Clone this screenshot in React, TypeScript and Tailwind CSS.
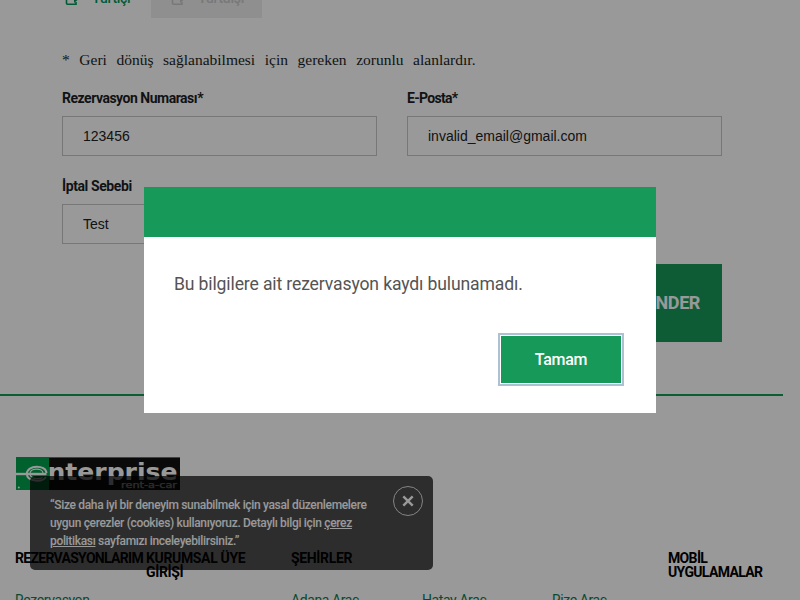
import React from "react";

const footerHeading = "font-bold text-[14px] leading-[14px] text-black whitespace-nowrap";
const footerLink = "text-[14px] leading-[18px] tracking-[-0.4px] text-[#0b7d50] whitespace-nowrap";

function TabIcon() {
  return (
    <svg width="14" height="16" viewBox="0 0 14 16" fill="none" stroke="currentColor" strokeWidth="1.6">
      <path d="M5 1H1.5v12.2q0 1 1 1H11V12" />
      <path d="M5 8h5" />
      <path d="M9 5l5 3.8L9 13z" fill="currentColor" stroke="none" />
    </svg>
  );
}

function Tabs() {
  return (
    <div className="flex h-[18px] items-end overflow-hidden pl-[40px] text-[14px] font-medium tracking-[-0.3px]">
      <div className="flex h-10 w-[111px] shrink-0 items-center gap-[13px] pl-[25px] text-[#00975a]">
        <TabIcon />
        <span>Yurtiçi</span>
      </div>
      <div className="flex h-10 w-[111px] shrink-0 items-center gap-[13px] bg-[#eeeeee] pl-[20px] text-[#c9c9c9]">
        <TabIcon />
        <span>Yurtdışı</span>
      </div>
    </div>
  );
}

function Field({ label, value, labelClass }: { label: string; value: string; labelClass: string }) {
  return (
    <label className="block w-[315px]">
      <span className={"block h-[26px] whitespace-nowrap text-[14px] font-bold leading-[17px] text-[#1c1f26] " + labelClass}>{label}</span>
      <input
        className="block h-10 w-full border border-[#c6c6c6] bg-white pl-[20px] pr-5 font-['Liberation_Sans',Arial,sans-serif] text-[14px] text-[#222] outline-none"
        value={value}
        readOnly
      />
    </label>
  );
}

function Logo() {
  return (
    <svg className="block" width="164" height="33" viewBox="0 0 164 33">
      <rect y="0.4" width="164" height="32.6" fill="#111" />
      <rect y="0.4" width="33" height="32.6" fill="#00a04e" />
      <g fill="none" stroke="#fff">
        <path d="M0 17h30.5" strokeWidth="2.4" />
        <path d="M30 20C26.5 25.5 11 25 10.8 16.8C11 7.5 30 7.5 30.5 16" strokeWidth="2" />
        <path d="M26.5 20.5C23 22.5 14 22 14 16.8C14 10.8 26.5 10.8 27 16" strokeWidth="1.2" />
      </g>
      <circle cx="2.8" cy="30.5" r="1" fill="#fff" />
      <text x="31.5" y="22.8" fill="#fff" fontFamily="DejaVu Sans" fontWeight="700" fontSize="23" textLength="130" lengthAdjust="spacingAndGlyphs">nterprise</text>
      <text x="105" y="31" fill="#fff" stroke="#fff" strokeWidth="0.25" fontFamily="DejaVu Sans" fontSize="9" textLength="56" lengthAdjust="spacingAndGlyphs">rent-a-car</text>
    </svg>
  );
}

function CookieNotice() {
  return (
    <div className="absolute left-[30px] top-[476px] flex h-[94px] w-[403px] justify-between rounded-[5px] bg-black/70 pl-5 pr-[10px]">
      <p className="whitespace-nowrap pt-[20px] text-[12px] font-medium leading-[18px] tracking-[-0.33px] text-white">
        “Size daha iyi bir deneyim sunabilmek için yasal düzenlemelere
        <br />
        uygun çerezler (cookies) kullanıyoruz. Detaylı bilgi için <u>çerez</u>
        <br />
        <u>politikası</u> sayfamızı inceleyebilirsiniz.”
      </p>
      <button className="mt-[10px] flex size-[30px] items-center justify-center rounded-full border border-white/80">
        <svg width="12" height="12" viewBox="0 0 12 12" stroke="#fff" strokeWidth="2.4">
          <path d="M1.3 1.3l9.4 9.4M10.7 1.3l-9.4 9.4" />
        </svg>
      </button>
    </div>
  );
}

function Modal() {
  return (
    <div className="absolute inset-0 flex items-center justify-center bg-black/40">
      <div className="h-[226px] w-[512px] bg-white">
        <div className="h-[50px] bg-[#179a59]" />
        <div className="flex flex-col px-[30px] pt-[35px]">
          <p className="whitespace-nowrap text-[17.6px] leading-6 tracking-[-0.14px] text-[#545454]">Bu bilgilere ait rezervasyon kaydı bulunamadı.</p>
          <button className="mr-[5px] mt-[40px] h-[47px] w-[120px] self-end bg-[#179a59] text-[16px] font-medium tracking-[-0.25px] text-white outline-2 outline-offset-1 outline-[#adc0d4]">
            Tamam
          </button>
        </div>
      </div>
    </div>
  );
}

export default function App() {
  return (
    <div className="relative h-[600px] w-[800px] overflow-hidden bg-white font-['Roboto',sans-serif]">
      <Tabs />
      <main className="h-[376px] pl-[62px] pt-[32px]">
        <p className="whitespace-nowrap font-['Liberation_Serif',serif] text-[15.5px] leading-5 text-[#1c1f26] [word-spacing:5.7px]">
          * Geri dönüş sağlanabilmesi için gereken zorunlu alanlardır.
        </p>
        <div className="flex w-[660px] flex-wrap gap-x-[30px] gap-y-[22px] pt-[20px]">
          <Field label="Rezervasyon Numarası*" value="123456" labelClass="tracking-[-0.49px]" />
          <Field label="E-Posta*" value="invalid_email@gmail.com" labelClass="tracking-[-0.7px]" />
          <Field label="İptal Sebebi" value="Test" labelClass="tracking-[-0.4px]" />
        </div>
        <div className="flex w-[660px] justify-end pt-[20px]">
          <button className="h-[78px] bg-[#179a59] px-[22px] pb-[2px] text-[18px] font-bold tracking-[-0.4px] text-white">GÖNDER</button>
        </div>
      </main>
      <footer>
        <div className="h-[2px] w-[783px] bg-[#179a59]" />
        <div className="pl-4 pt-[61px]">
          <Logo />
        </div>
        <div className="flex pl-[15px] pt-[61px]">
          <h4 className={footerHeading + " w-[131px] tracking-[-0.7px]"}>REZERVASYONLARIM</h4>
          <h4 className={footerHeading + " w-[145px] tracking-[-0.35px]"}>KURUMSAL ÜYE<br />GİRİŞİ</h4>
          <h4 className={footerHeading + " w-[377px] tracking-[-0.35px]"}>ŞEHİRLER</h4>
          <h4 className={footerHeading + " tracking-[-0.65px]"}>MOBİL<br />UYGULAMALAR</h4>
        </div>
        <div className="flex pl-[15px] pt-[12px]">
          <a className={footerLink + " w-[276px]"}>Rezervasyon</a>
          <a className={footerLink + " w-[131px]"}>Adana Araç</a>
          <a className={footerLink + " w-[130px]"}>Hatay Araç</a>
          <a className={footerLink}>Rize Araç</a>
        </div>
      </footer>
      <CookieNotice />
      <Modal />
    </div>
  );
}
